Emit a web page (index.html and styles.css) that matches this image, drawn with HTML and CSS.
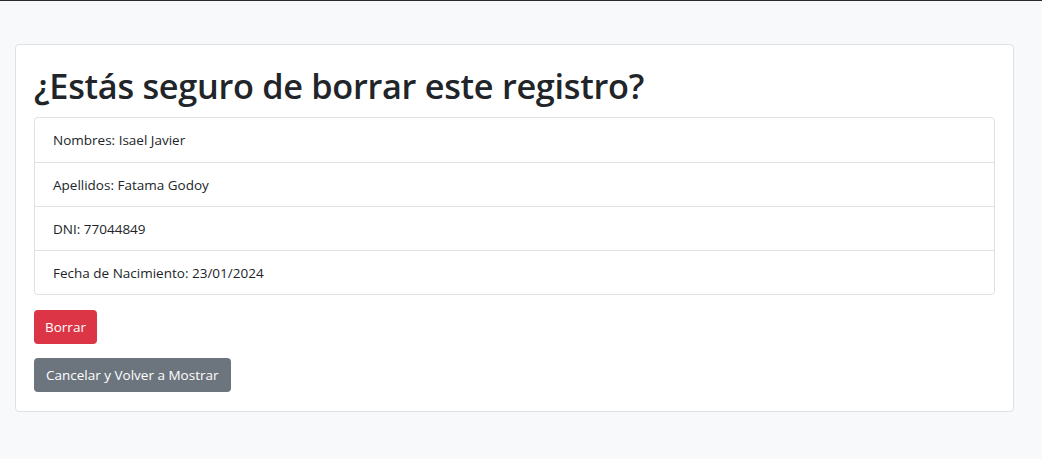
FILE: index.html
```html
<!DOCTYPE html>
<html lang="es">
<head>
<meta charset="utf-8">
<title>Borrar registro</title>
<link rel="stylesheet" href="styles.css">
</head>
<body>
<div class="topline"></div>
<main class="page">
  <section class="card">
    <h1 class="title">¿Estás seguro de borrar este registro?</h1>
    <ul class="list">
      <li class="item">Nombres: Isael Javier</li>
      <li class="item">Apellidos: Fatama Godoy</li>
      <li class="item">DNI: 77044849</li>
      <li class="item">Fecha de Nacimiento: 23/01/2024</li>
    </ul>
    <div class="actions">
      <button class="btn btn-danger" type="button">Borrar</button>
      <button class="btn btn-secondary" type="button">Cancelar y Volver a Mostrar</button>
    </div>
  </section>
</main>
</body>
</html>
```

FILE: styles.css
```css
* { box-sizing: border-box; }
html, body { margin: 0; padding: 0; }
body {
  background: #f8f9fa;
  color: #212529;
  font-family: "Open Sans", "Noto Sans", sans-serif;
  font-size: 14px;
}
.topline {
  height: 1px;
  background: #2b2b2b;
}
.page {
  padding: 43px 28px 47px 15px;
}
.card {
  background: #fff;
  border: 1px solid #dfe1e4;
  border-radius: 4px;
  padding: 18px 18px 19px 18px;
}
.title {
  margin: 0 0 9px 0;
  font-size: 34.3px;
  line-height: 45px;
  font-weight: 600;
  letter-spacing: -0.3px;
  color: #212529;
}
.list {
  list-style: none;
  margin: 0;
  padding: 0;
  border: 1px solid #dfe1e4;
  border-radius: 4px;
}
.item {
  padding: 0 18px;
  height: 44px;
  display: flex;
  align-items: center;
  border-top: 1px solid #dfe1e4;
  font-size: 13.5px;
}
.item:first-child { border-top: 0; height: 44px; }
.actions {
  display: flex;
  flex-direction: column;
  align-items: flex-start;
  gap: 14px;
  margin-top: 15px;
}
.btn {
  font-family: inherit;
  font-size: 13.5px;
  color: #fff;
  border: 0;
  border-radius: 4px;
  height: 34px;
  padding: 0 11px;
  line-height: 34px;
}
.btn-danger { background: #dc3545; }
.btn-secondary { background: #6c757d; padding: 0 12px; }
```
